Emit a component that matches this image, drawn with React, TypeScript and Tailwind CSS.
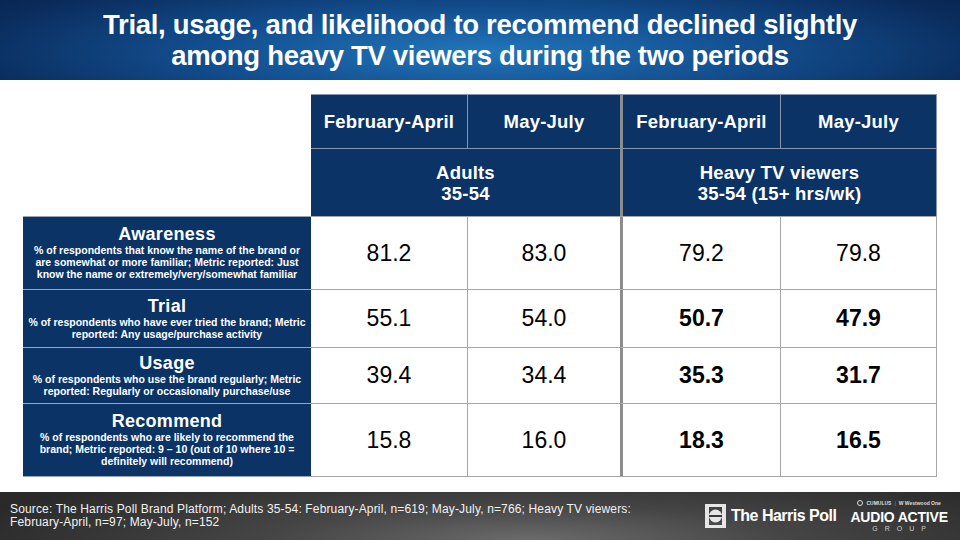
import React from "react";

const F = { fontFamily: '"Liberation Sans", Arial, sans-serif' };

const labels = [
  {
    title: "Awareness",
    desc: [
      "% of respondents that know the name of the brand or",
      "are somewhat or more familiar; Metric reported: Just",
      "know the name or extremely/very/somewhat familiar",
    ],
    h: "h-[73px]",
  },
  {
    title: "Trial",
    desc: ["% of respondents who have ever tried the brand; Metric", "reported: Any usage/purchase activity"],
    h: "h-[58px]",
  },
  {
    title: "Usage",
    desc: ["% of respondents who use the brand regularly; Metric", "reported: Regularly or occasionally purchase/use"],
    h: "h-[56px]",
  },
  {
    title: "Recommend",
    desc: [
      "% of respondents who are likely to recommend the",
      "brand; Metric reported: 9 \u2013 10 (out of 10 where 10 =",
      "definitely will recommend)",
    ],
    h: "h-[73px]",
  },
];

const values: [string, string, string, string, boolean][] = [
  ["81.2", "83.0", "79.2", "79.8", false],
  ["55.1", "54.0", "50.7", "47.9", true],
  ["39.4", "34.4", "35.3", "31.7", true],
  ["15.8", "16.0", "18.3", "16.5", true],
];

function HarrisIcon() {
  return (
    <svg width="21" height="24" viewBox="0 0 21 24">
      <rect x="0" y="0" width="4" height="24" fill="#e6e6e6" />
      <rect x="17" y="0" width="4" height="24" fill="#e6e6e6" />
      <rect x="4" y="0" width="13" height="3" fill="#e6e6e6" />
      <rect x="4" y="21" width="13" height="3" fill="#e6e6e6" />
      <circle cx="10.5" cy="12" r="6.5" fill="#e6e6e6" />
      <rect x="4" y="11" width="13" height="2" fill="#3a3a3a" />
    </svg>
  );
}

export default function App() {
  return (
    <div className="w-[960px] h-[540px] flex flex-col bg-white overflow-hidden" style={F}>
      {/* Title band */}
      <div className="h-[80px] flex flex-col items-center justify-center bg-[radial-gradient(ellipse_70%_130%_at_50%_65%,#2177bb_0%,#134f90_40%,#0a2c5c_78%,#071f45_100%)]">
        <div className="text-white font-bold text-[27.5px] leading-[31px] text-center tracking-[-0.3px] whitespace-nowrap">
          Trial, usage, and likelihood to recommend declined slightly
        </div>
        <div className="text-white font-bold text-[27.5px] leading-[31px] text-center tracking-[-0.3px] whitespace-nowrap">
          among heavy TV viewers during the two periods
        </div>
      </div>

      {/* Main table area */}
      <div className="flex-1 pl-[23px] pt-[14px]">
        <div className="flex flex-col w-[914px]">
          {/* Header row 1 */}
          <div className="flex h-[54px]">
            <div className="w-[288px]" />
            <div className="flex flex-1 bg-[#0b3366] border-t border-[#8796ad] text-white font-bold text-[18.5px] tracking-[0.2px]">
              <div className="w-[157px] flex items-center justify-center border-r border-[#8796ad]">February-April</div>
              <div className="w-[155px] flex items-center justify-center border-r-[3px] border-[#8c8c8c]">May-July</div>
              <div className="w-[158px] flex items-center justify-center border-r border-[#8796ad]">February-April</div>
              <div className="flex-1 flex items-center justify-center border-r border-[#8796ad]">May-July</div>
            </div>
          </div>
          {/* Header row 2 */}
          <div className="flex h-[68px]">
            <div className="w-[288px]" />
            <div className="flex flex-1 bg-[#0b3366] border-t border-[#8796ad] text-white font-bold text-[18.5px] leading-[21px] tracking-[0.2px]">
              <div className="w-[312px] flex flex-col items-center justify-center border-r-[3px] border-[#8c8c8c]">
                <div>Adults</div>
                <div>35-54</div>
              </div>
              <div className="flex-1 flex flex-col items-center justify-center border-r border-[#8796ad]">
                <div>Heavy TV viewers</div>
                <div>35-54 (15+ hrs/wk)</div>
              </div>
            </div>
          </div>
          {/* Data rows */}
          {labels.map((l, i) => {
            const v = values[i];
            return (
              <div key={l.title} className={`flex ${l.h}`}>
                <div className="w-[288px] bg-[#0b3366] border-t border-[#9aa6b8] flex flex-col items-center justify-center text-white text-center pb-[1px]">
                  <div className="font-bold text-[18px] leading-[19px] tracking-[0.3px]">{l.title}</div>
                  {l.desc.map((d) => (
                    <div key={d} className="font-bold text-[10.5px] leading-[12px] whitespace-nowrap">
                      {d}
                    </div>
                  ))}
                </div>
                <div className="flex flex-1 border-t border-[#a6a6a6] text-black text-[23px]">
                  <div className="w-[157px] flex items-center justify-center border-r border-[#a6a6a6]">{v[0]}</div>
                  <div className="w-[155px] flex items-center justify-center border-r-[3px] border-[#8c8c8c]">{v[1]}</div>
                  <div className={`w-[158px] flex items-center justify-center border-r border-[#a6a6a6] ${v[4] ? "font-bold" : ""}`}>{v[2]}</div>
                  <div className={`flex-1 flex items-center justify-center border-r border-[#a6a6a6] ${v[4] ? "font-bold" : ""}`}>{v[3]}</div>
                </div>
              </div>
            );
          })}
          <div className="flex h-px">
            <div className="w-[288px] bg-[#9aa6b8]" />
            <div className="flex-1 bg-[#a6a6a6]" />
          </div>
        </div>
      </div>

      {/* Footer */}
      <div className="h-[48px] flex items-center bg-[radial-gradient(ellipse_60%_160%_at_55%_100%,#6b6b6b_0%,#454545_45%,#2a2a2a_100%)]">
        <div className="flex-none pl-[10px] w-[705px] text-[#f2f2f2] text-[12px] leading-[13px] tracking-[0.15px] whitespace-nowrap">
          <div>Source: The Harris Poll Brand Platform; Adults 35-54: February-April, n=619; May-July, n=766; Heavy TV viewers:</div>
          <div>February-April, n=97; May-July, n=152</div>
        </div>
        <div className="flex-none flex items-center gap-[5px]">
          <HarrisIcon />
          <div className="text-white font-bold text-[16px] tracking-[-0.5px] whitespace-nowrap">The Harris Poll</div>
        </div>
        <div className="flex-none flex flex-col items-center ml-[14px] text-white whitespace-nowrap">
          <div className="flex items-center gap-[3px] text-[5px] leading-[6px] text-[#dddddd]">
            <span className="inline-block w-[6px] h-[6px] rounded-full border border-[#dddddd]" />
            <span className="font-bold">CUMULUS</span>
            <span className="text-[#999]">|</span>
            <span className="font-bold">W Westwood One</span>
          </div>
          <div className="font-bold text-[14px] leading-[16px] mt-[3px] tracking-[-0.2px]">AUDIO ACTIVE</div>
          <div className="text-[7px] leading-[8px] tracking-[7px] pl-[7px] text-[#cccccc]">GROUP</div>
        </div>
      </div>
    </div>
  );
}
